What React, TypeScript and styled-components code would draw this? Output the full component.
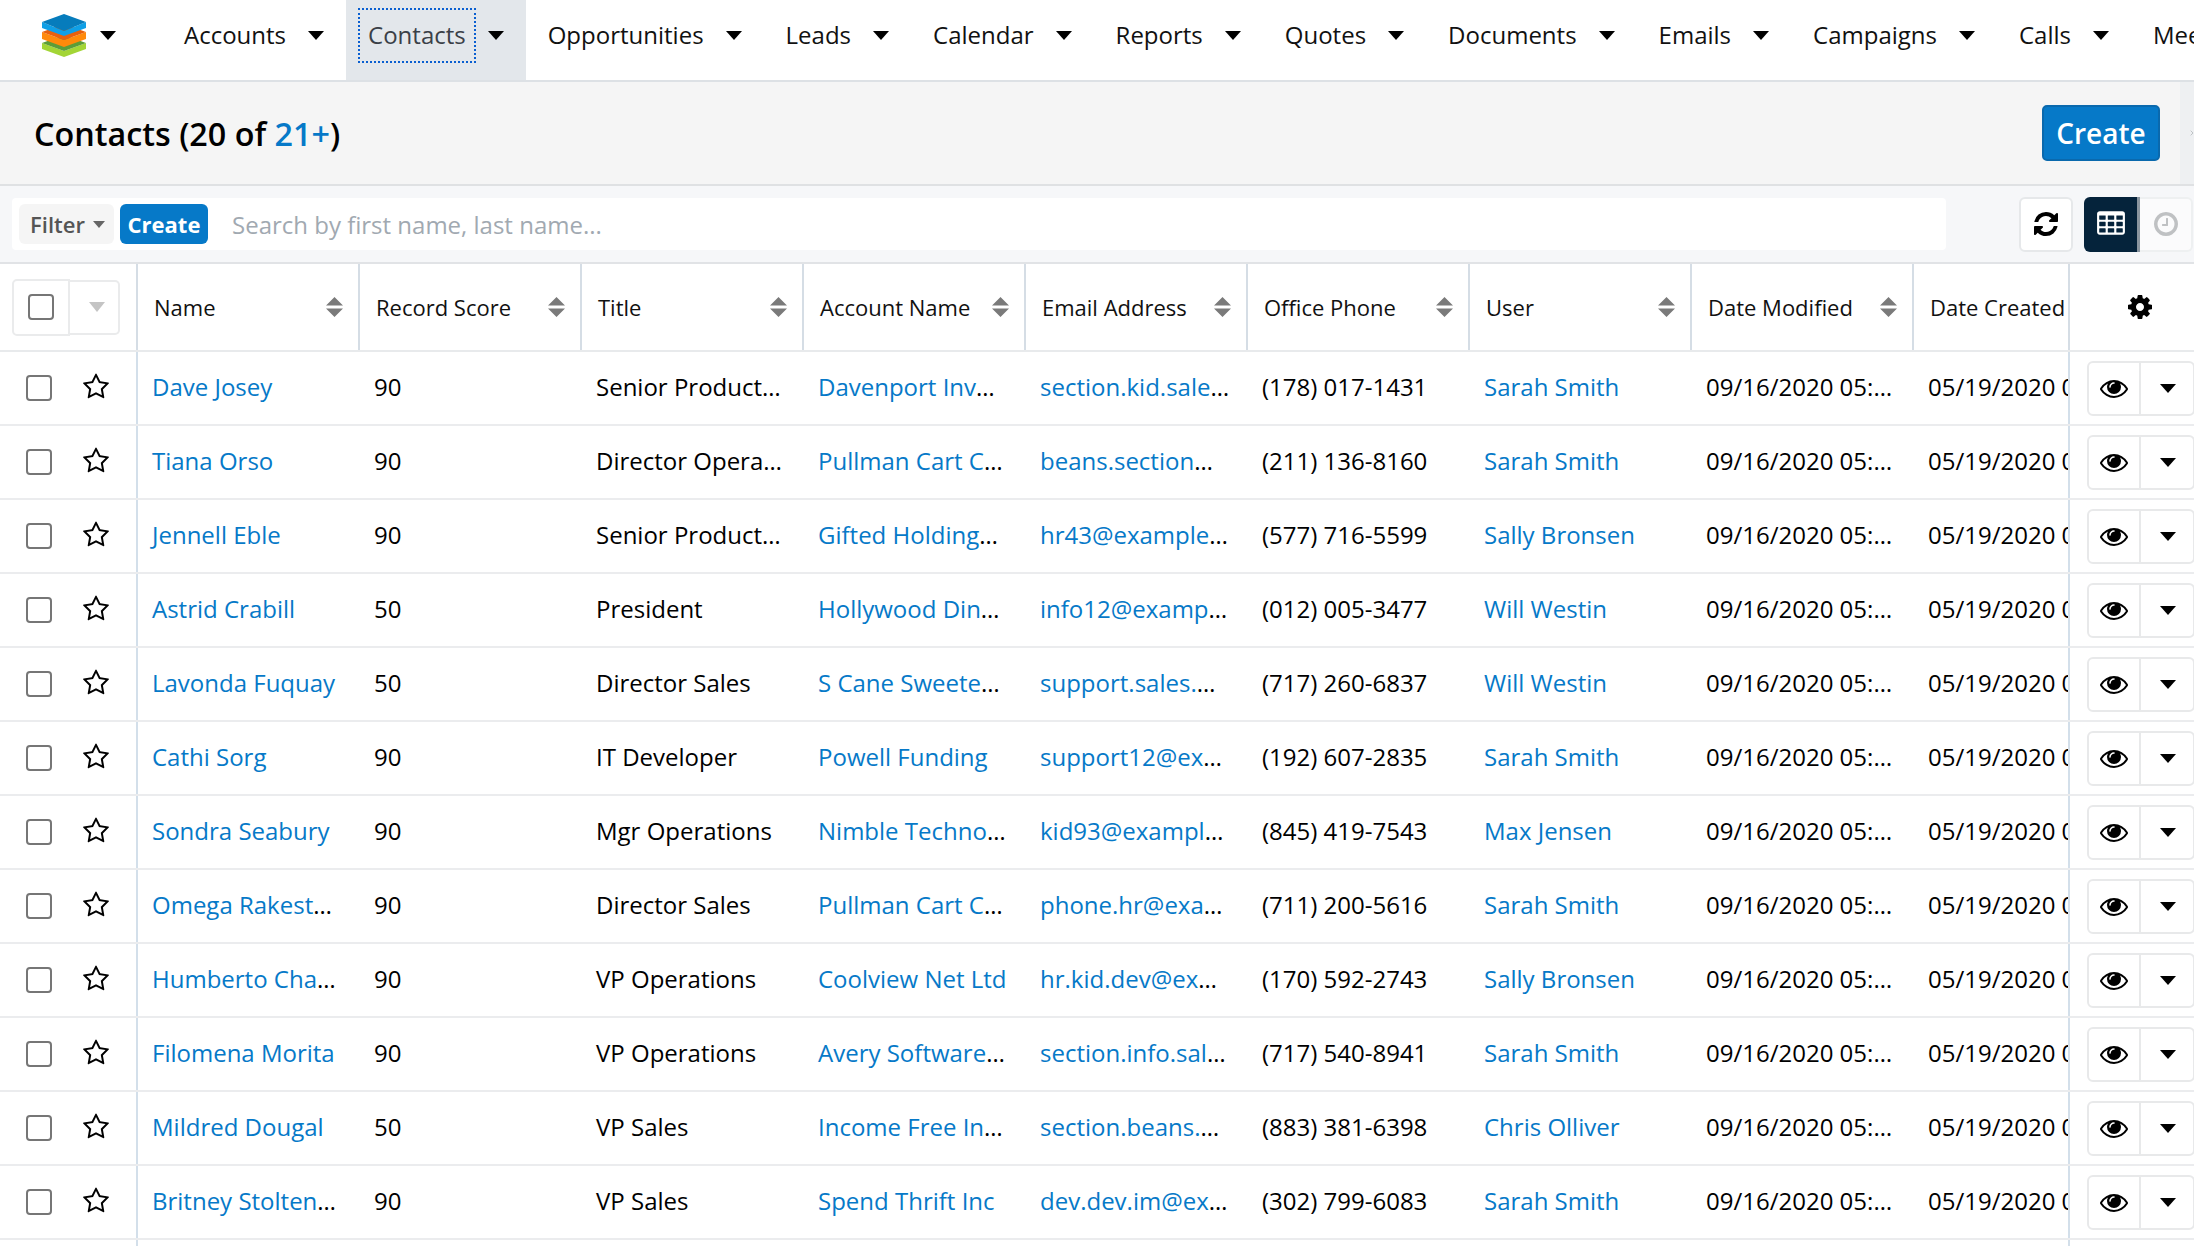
import styled, { createGlobalStyle } from "styled-components";

const GlobalStyle = createGlobalStyle`
  html, body {
    margin: 0;
    padding: 0;
    background: #fff;
    overflow: hidden;
  }
  * {
    box-sizing: border-box;
  }
`;

const navItems = [
  "Accounts",
  "Contacts",
  "Opportunities",
  "Leads",
  "Calendar",
  "Reports",
  "Quotes",
  "Documents",
  "Emails",
  "Campaigns",
  "Calls",
  "Meetings",
];

const columns = [
  "Name",
  "Record Score",
  "Title",
  "Account Name",
  "Email Address",
  "Office Phone",
  "User",
  "Date Modified",
];

const contacts = [
  ["Dave Josey", "90", "Senior Product Manager", "Davenport Investing", "section.kid.sales@example.tv", "(178) 017-1431", "Sarah Smith"],
  ["Tiana Orso", "90", "Director Operations", "Pullman Cart Company", "beans.section@example.cn", "(211) 136-8160", "Sarah Smith"],
  ["Jennell Eble", "90", "Senior Product Manager", "Gifted Holdings AG", "hr43@example.co.jp", "(577) 716-5599", "Sally Bronsen"],
  ["Astrid Crabill", "50", "President", "Hollywood Diner Ltd", "info12@example.org", "(012) 005-3477", "Will Westin"],
  ["Lavonda Fuquay", "50", "Director Sales", "S Cane Sweeteners Ltd", "support.sales.marketing@example.net", "(717) 260-6837", "Will Westin"],
  ["Cathi Sorg", "90", "IT Developer", "Powell Funding", "support12@example.biz", "(192) 607-2835", "Sarah Smith"],
  ["Sondra Seabury", "90", "Mgr Operations", "Nimble Technologies Inc", "kid93@example.info", "(845) 419-7543", "Max Jensen"],
  ["Omega Rakestraw", "90", "Director Sales", "Pullman Cart Company", "phone.hr@example.us", "(711) 200-5616", "Sarah Smith"],
  ["Humberto Chamberlain", "90", "VP Operations", "Coolview Net Ltd", "hr.kid.dev@exmail.name", "(170) 592-2743", "Sally Bronsen"],
  ["Filomena Morita", "90", "VP Operations", "Avery Software Co", "section.info.sales@example.tw", "(717) 540-8941", "Sarah Smith"],
  ["Mildred Dougal", "50", "VP Sales", "Income Free Investing LP", "section.beans.marketing@example.de", "(883) 381-6398", "Chris Olliver"],
  ["Britney Stoltenberg", "90", "VP Sales", "Spend Thrift Inc", "dev.dev.im@example.com", "(302) 799-6083", "Sarah Smith"],
];

// font awesome 4 glyphs, the ones the real page uses
const glyphs = {
  eye: "M1664 960q-152-236-381-353 61 104 61 225 0 185-131.500 316.500t-316.500 131.500-316.500-131.500-131.500-316.500q0-121 61-225-229 117-381 353 133 205 333.500 326.500t434.500 121.500 434.500-121.500 333.500-326.500zm-720-384q0-20-14-34t-34-14q-125 0-214.500 89.500t-89.500 214.500q0 20 14 34t34 14 34-14 14-34q0-86 61-147t147-61q20 0 34-14t14-34zm848 384q0 34-20 69-140 230-376.500 368.500t-499.500 138.500-499.500-139-376.500-368q-20-35-20-69t20-69q140-229 376.500-368t499.500-139 499.500 139 376.500 368q20 35 20 69z",
  refresh: "M1639 1056q0 5-1 7-64 268-268 434.500t-478 166.500q-146 0-282.500-55t-243.500-157l-129 129q-19 19-45 19t-45-19-19-45v-448q0-26 19-45t45-19h448q26 0 45 19t19 45-19 45l-137 137q71 66 161 102t187 36q134 0 250-65t186-179q11-17 53-117 8-23 30-23h192q13 0 22.500 9.500t9.500 22.500zm25-800v448q0 26-19 45t-45 19h-448q-26 0-45-19t-19-45 19-45l138-138q-148-137-349-137-134 0-250 65t-186 179q-11 17-53 117-8 23-30 23h-199q-13 0-22.500-9.500t-9.500-22.500v-7q65-268 270-434.500t480-166.500q146 0 284 55.500t245 156.500l130-129q19-19 45-19t45 19 19 45z",
  table: "M576 1376v-192q0-14-9-23t-23-9h-320q-14 0-23 9t-9 23v192q0 14 9 23t23 9h320q14 0 23-9t9-23zm0-384v-192q0-14-9-23t-23-9h-320q-14 0-23 9t-9 23v192q0 14 9 23t23 9h320q14 0 23-9t9-23zm512 384v-192q0-14-9-23t-23-9h-320q-14 0-23 9t-9 23v192q0 14 9 23t23 9h320q14 0 23-9t9-23zm-512-768v-192q0-14-9-23t-23-9h-320q-14 0-23 9t-9 23v192q0 14 9 23t23 9h320q14 0 23-9t9-23zm512 384v-192q0-14-9-23t-23-9h-320q-14 0-23 9t-9 23v192q0 14 9 23t23 9h320q14 0 23-9t9-23zm512 384v-192q0-14-9-23t-23-9h-320q-14 0-23 9t-9 23v192q0 14 9 23t23 9h320q14 0 23-9t9-23zm-512-768v-192q0-14-9-23t-23-9h-320q-14 0-23 9t-9 23v192q0 14 9 23t23 9h320q14 0 23-9t9-23zm512 384v-192q0-14-9-23t-23-9h-320q-14 0-23 9t-9 23v192q0 14 9 23t23 9h320q14 0 23-9t9-23zm0-384v-192q0-14-9-23t-23-9h-320q-14 0-23 9t-9 23v192q0 14 9 23t23 9h320q14 0 23-9t9-23zm128-320v1088q0 66-47 113t-113 47h-1344q-66 0-113-47t-47-113v-1088q0-66 47-113t113-47h1344q66 0 113 47t47 113z",
  clock: "M1024 544v448q0 14-9 23t-23 9h-320q-14 0-23-9t-9-23v-64q0-14 9-23t23-9h224v-352q0-14 9-23t23-9h64q14 0 23 9t9 23zm416 352q0-148-73-273t-198-198-273-73-273 73-198 198-73 273 73 273 198 198 273 73 273-73 198-198 73-273zm224 0q0 209-103 385.500t-279.500 279.500-385.500 103-385.500-103-279.500-279.500-103-385.500 103-385.500 279.500-279.500 385.500-103 385.500 103 279.500 279.500 103 385.500z",
  cog: "M1152 896q0-106-75-181t-181-75-181 75-75 181 75 181 181 75 181-75 75-181zm512-109v222q0 12-8 23t-20 13l-185 28q-19 54-39 91 35 50 107 138 10 12 10 25t-9 23q-27 37-99 108t-94 71q-12 0-26-9l-138-108q-44 23-91 38-16 136-29 186-7 28-36 28h-222q-14 0-24.500-8.500t-11.500-21.500l-28-184q-49-16-90-37l-141 107q-10 9-25 9-14 0-25-11-126-114-165-168-7-10-7-23 0-12 8-23 15-21 51-66.500t54-70.500q-27-50-41-99l-183-27q-13-2-21-12.500t-8-23.500v-222q0-12 8-23t19-13l186-28q14-46 39-92-40-57-107-138-10-12-10-24 0-10 9-23 26-36 98.500-107.500t94.500-71.500q13 0 26 10l138 107q44-23 91-38 16-136 29-186 7-28 36-28h222q14 0 24.500 8.500t11.500 21.500l28 184q49 16 90 37l142-107q9-9 24-9 13 0 25 10 129 119 165 170 7 8 7 22 0 12-8 23-15 21-51 66.500t-54 70.500q26 50 41 98l183 28q13 2 21 12.500t8 23.500z",
  star: "M1201 1004l306-297-422-62-189-382-189 382-422 62 306 297-73 421 378-199 377 199zm527-357q0 22-26 48l-363 354 86 500q1 7 1 20 0 50-41 50-19 0-40-12l-449-236-449 236q-22 12-40 12-21 0-31.500-14.500t-10.500-35.500q0-6 2-20l86-500-364-354q-25-27-25-48 0-37 56-46l502-73 225-455q19-41 49-41t49 41l225 455 502 73q56 9 56 46z",
};

const Glyph = ({ name, size, color }: { name: keyof typeof glyphs; size: number; color: string }) => (
  <svg width={size} height={size} viewBox="0 0 1792 1792">
    <path d={glyphs[name]} fill={color} />
  </svg>
);

const Logo = () => (
  <svg width="44" height="43" viewBox="0 0 44 43">
    <path d="M0 29 L22 37 L44 29 V35 L22 43 L0 35 Z" fill="#a3d536" />
    <path d="M0 29 L22 21 L44 29 L22 37 Z" fill="#5c9d38" />
    <path d="M0 18 L22 26 L44 18 V25 L22 33 L0 25 Z" fill="#ff8a0b" />
    <path d="M0 18 L22 10 L44 18 L22 26 Z" fill="#e8600c" />
    <path d="M0 8 L22 17 L44 8 V14 L22 22 L0 14 Z" fill="#0f9fe6" />
    <path d="M0 8 L22 0 L44 8 L22 17 Z" fill="#067cbc" />
  </svg>
);

const SortIcon = () => (
  <SortSvg width="17" height="20" viewBox="0 0 17 20">
    <path d="M8.5 0 L17 8.5 H0 Z M8.5 20 L0 11.5 H17 Z" fill="#7a7a7a" />
  </SortSvg>
);

const App = () => (
  <Page>
    <GlobalStyle />
    <Nav>
      <LogoMenu>
        <Logo />
        <Caret />
      </LogoMenu>
      {navItems.map((item) => (
        <NavItem key={item} $active={item === "Contacts"}>
          <NavLabel $active={item === "Contacts"}>{item}</NavLabel>
          <Caret />
        </NavItem>
      ))}
    </Nav>

    <PageHeader>
      <Title>
        Contacts (20 of <TitleCount>21+</TitleCount>)
      </Title>
      <HeaderActions>
        <PrimaryButton>Create</PrimaryButton>
        <SideStrip>
          <svg width="12" height="20" viewBox="0 0 12 20">
            <path d="M2 3 L9 10 L2 17" fill="none" stroke="#b4b8bc" strokeWidth="2.5" />
          </svg>
        </SideStrip>
      </HeaderActions>
    </PageHeader>

    <Toolbar>
      <SearchBox>
        <FilterButton>
          Filter <SmallCaret />
        </FilterButton>
        <SmallCreate>Create</SmallCreate>
        <SearchInput>Search by first name, last name...</SearchInput>
      </SearchBox>
      <ToolButton>
        <Glyph name="refresh" size={28} color="#000" />
      </ToolButton>
      <ToggleGroup>
        <ToggleOn>
          <Glyph name="table" size={30} color="#fff" />
        </ToggleOn>
        <ToggleOff>
          <Glyph name="clock" size={28} color="#bfc1c3" />
        </ToggleOff>
      </ToggleGroup>
    </Toolbar>

    <HeadRow>
      <SelectCell>
        <SelectAll>
          <Checkbox />
        </SelectAll>
        <SelectMenu>
          <GreyCaret />
        </SelectMenu>
      </SelectCell>
      {columns.map((label) => (
        <HeadCell key={label} $width={222}>
          <HeadLabel>{label}</HeadLabel>
          <SortIcon />
        </HeadCell>
      ))}
      <HeadCell $width={156}>
        <HeadLabel>Date Created</HeadLabel>
      </HeadCell>
      <GearCell>
        <Glyph name="cog" size={28} color="#000" />
      </GearCell>
    </HeadRow>

    {contacts.map((c) => (
      <Row key={c[0]}>
        <MarkCell>
          <Checkbox />
          <StarMark>
            <Glyph name="star" size={28} color="#000" />
          </StarMark>
        </MarkCell>
        <Cell $pad={20}>
          <RecordLink>{c[0]}</RecordLink>
        </Cell>
        <Cell>{c[1]}</Cell>
        <Cell $pad={20}>{c[2]}</Cell>
        <Cell $pad={18}>
          <RecordLink>{c[3]}</RecordLink>
        </Cell>
        <Cell>
          <RecordLink>{c[4]}</RecordLink>
        </Cell>
        <Cell>{c[5]}</Cell>
        <Cell>
          <RecordLink>{c[6]}</RecordLink>
        </Cell>
        <Cell>09/16/2020 05:25pm</Cell>
        <ClippedCell>05/19/2020 04:10pm</ClippedCell>
        <ActionCell>
          <ActionGroup>
            <EyeButton>
              <Glyph name="eye" size={28} color="#000" />
            </EyeButton>
            <MenuButton>
              <Caret />
            </MenuButton>
          </ActionGroup>
        </ActionCell>
      </Row>
    ))}
    <Row>
      <MarkCell />
      <Cell $width={1776} />
      <ClippedCell />
      <ActionCell />
    </Row>
  </Page>
);

export default App;

const Page = styled.div`
  width: 2194px;
  height: 1246px;
  overflow: hidden;
  background: #fff;
  color: #000;
  font-family: "Open Sans", "Liberation Sans", sans-serif;
`;

const Nav = styled.nav`
  display: flex;
  height: 82px;
  border-bottom: 2px solid #dde1e5;
  overflow: hidden;
`;

const LogoMenu = styled.div`
  display: flex;
  align-items: center;
  flex-shrink: 0;
  width: 162px;
  padding-left: 42px;
  column-gap: 14px;
  padding-bottom: 9px;
`;

const Caret = styled.span`
  display: inline-block;
  flex-shrink: 0;
  width: 0;
  height: 0;
  border-left: 8.5px solid transparent;
  border-right: 8.5px solid transparent;
  border-top: 9px solid #000;
`;

const NavItem = styled.div<{ $active?: boolean }>`
  display: flex;
  align-items: center;
  flex-shrink: 0;
  height: 80px;
  padding: 0 22px 9px;
  column-gap: 22px;
  background: ${(props) => (props.$active ? "#e3e7eb" : "transparent")};
`;

const NavLabel = styled.span<{ $active?: boolean }>`
  font-size: 24px;
  line-height: 53px;
  padding-bottom: 2px;
  color: ${(props) => (props.$active ? "#3a4047" : "#111")};
  outline: ${(props) => (props.$active ? "2px dotted #0a5fd0" : "none")};
  outline-offset: -2px;
  margin: ${(props) => (props.$active ? "0 -10px" : "0")};
  padding-left: ${(props) => (props.$active ? "10px" : "0")};
  padding-right: ${(props) => (props.$active ? "10px" : "0")};
`;

const PageHeader = styled.header`
  display: flex;
  justify-content: space-between;
  align-items: stretch;
  height: 104px;
  background: #f5f5f5;
  border-bottom: 2px solid #dfe1e3;
`;

const Title = styled.h1`
  align-self: center;
  margin: 0 0 0 34px;
  font-size: 32.3px;
  font-weight: 600;
  color: #000;
`;

const TitleCount = styled.span`
  color: #0679c8;
`;

const HeaderActions = styled.div`
  display: flex;
  align-items: center;
  column-gap: 20px;
`;

const PrimaryButton = styled.button`
  width: 118px;
  height: 56px;
  padding: 0;
  background: #0679c8;
  border: 2px solid #0a69ad;
  border-radius: 5px;
  color: #fff;
  font-family: inherit;
  font-size: 28px;
  font-weight: 600;
`;

const SideStrip = styled.div`
  display: flex;
  align-items: center;
  align-self: stretch;
  width: 14px;
  padding-left: 10px;
  background: #eef0f2;
  overflow: hidden;
`;

const Toolbar = styled.div`
  display: flex;
  align-items: center;
  height: 78px;
  padding: 0 1px 0 12px;
  background: #f6f7f9;
  border-bottom: 2px solid #e1e3e6;
`;

const SearchBox = styled.div`
  display: flex;
  align-items: center;
  flex-shrink: 0;
  width: 1934px;
  height: 52px;
  padding-left: 7px;
  background: #fff;
  border-radius: 4px;
`;

const FilterButton = styled.div`
  display: flex;
  align-items: center;
  justify-content: center;
  column-gap: 8px;
  width: 95px;
  height: 40px;
  padding-left: 2px;
  background: #f5f5f5;
  border-radius: 6px;
  color: #555;
  font-size: 22px;
  font-weight: 600;
`;

const SmallCaret = styled.span`
  width: 0;
  height: 0;
  border-left: 6.5px solid transparent;
  border-right: 6.5px solid transparent;
  border-top: 7px solid #666;
`;

const SmallCreate = styled.div`
  display: flex;
  align-items: center;
  justify-content: center;
  width: 88px;
  height: 40px;
  margin-left: 6px;
  background: #0679c8;
  border-radius: 6px;
  color: #fff;
  font-size: 22px;
  font-weight: 700;
`;

const SearchInput = styled.div`
  margin-left: 24px;
  font-size: 24px;
  color: #a1a9b1;
`;

const ToolButton = styled.div`
  display: flex;
  align-items: center;
  justify-content: center;
  width: 55px;
  height: 55px;
  margin-left: 73px;
  background: #fff;
  border: 2px solid #e6e8ea;
  border-radius: 6px;
`;

const ToggleGroup = styled.div`
  display: flex;
  height: 55px;
  margin-left: 11px;
`;

const ToggleOn = styled.div`
  display: flex;
  align-items: center;
  justify-content: center;
  width: 56px;
  background: #05233b;
  border-right: 3px solid #8a959f;
  border-radius: 6px 0 0 6px;
`;

const ToggleOff = styled.div`
  display: flex;
  align-items: center;
  justify-content: center;
  width: 53px;
  background: #fbfbfc;
  border: 2px solid #eef0f1;
  border-left: 0;
  border-radius: 0 6px 6px 0;
`;

const HeadRow = styled.div`
  display: flex;
  height: 88px;
  border-bottom: 2px solid #e8eaec;
`;

const SelectCell = styled.div`
  display: flex;
  align-items: center;
  flex-shrink: 0;
  width: 138px;
  padding-left: 12px;
  border-right: 2px solid #d5dde5;
`;

const SelectAll = styled.div`
  display: flex;
  align-items: center;
  justify-content: center;
  width: 58px;
  height: 57px;
  background: #fff;
  border: 2px solid #eaebec;
  border-radius: 5px 0 0 5px;
`;

const SelectMenu = styled.div`
  display: flex;
  align-items: center;
  justify-content: center;
  width: 50px;
  height: 55px;
  padding-left: 6px;
  border: 2px solid #eaebec;
  border-left: 0;
  border-radius: 0 5px 5px 0;
`;

const GreyCaret = styled.span`
  width: 0;
  height: 0;
  border-left: 8.5px solid transparent;
  border-right: 8.5px solid transparent;
  border-top: 10px solid #c4c4c4;
`;

const Checkbox = styled.span`
  display: block;
  flex-shrink: 0;
  width: 26px;
  height: 26px;
  background: #fff;
  border: 2px solid #767676;
  border-radius: 4px;
`;

const HeadCell = styled.div<{ $width: number }>`
  display: flex;
  align-items: center;
  justify-content: space-between;
  flex-shrink: 0;
  width: ${(props) => props.$width}px;
  padding: 0 15px 0 16px;
  border-right: 2px solid #d5dde5;
  overflow: hidden;
`;

const HeadLabel = styled.span`
  font-size: 22px;
  white-space: nowrap;
  color: #111;
`;

const SortSvg = styled.svg`
  flex-shrink: 0;
`;

const GearCell = styled.div`
  display: flex;
  align-items: center;
  justify-content: center;
  flex: 1;
  padding-left: 16px;
`;

const Row = styled.div`
  display: flex;
  align-items: stretch;
  height: 74px;
  border-bottom: 2px solid #ebecee;
  font-size: 24px;
`;

const MarkCell = styled.div`
  display: flex;
  align-items: center;
  flex-shrink: 0;
  column-gap: 30px;
  width: 138px;
  padding-left: 26px;
  border-right: 2px solid #d3dfea;
`;

const StarMark = styled.span`
  display: flex;
  margin-bottom: 2px;
`;

const Cell = styled.div<{ $width?: number; $pad?: number }>`
  flex: 0 0 ${(props) => props.$width ?? 222}px;
  padding: 0 ${(props) => props.$pad ?? 17}px 0 14px;
  line-height: 69px;
  white-space: nowrap;
  overflow: hidden;
  text-overflow: ellipsis;
`;

const ClippedCell = styled.div`
  flex: 0 0 156px;
  padding-left: 14px;
  line-height: 69px;
  white-space: nowrap;
  overflow: hidden;
  border-right: 2px solid #d3dfea;
`;

const RecordLink = styled.a`
  color: #0679c8;
`;

const ActionCell = styled.div`
  display: flex;
  align-items: center;
  flex: 1;
  padding-left: 17px;
`;

const ActionGroup = styled.div`
  display: flex;
  flex-shrink: 0;
  width: 108px;
  height: 55px;
  border: 2px solid #e8e9ea;
  border-radius: 6px;
`;

const EyeButton = styled.div`
  display: flex;
  align-items: center;
  justify-content: center;
  width: 52px;
  border-right: 2px solid #e8e9ea;
`;

const MenuButton = styled.div`
  display: flex;
  align-items: center;
  justify-content: center;
  flex: 1;
  padding-left: 1px;
`;
